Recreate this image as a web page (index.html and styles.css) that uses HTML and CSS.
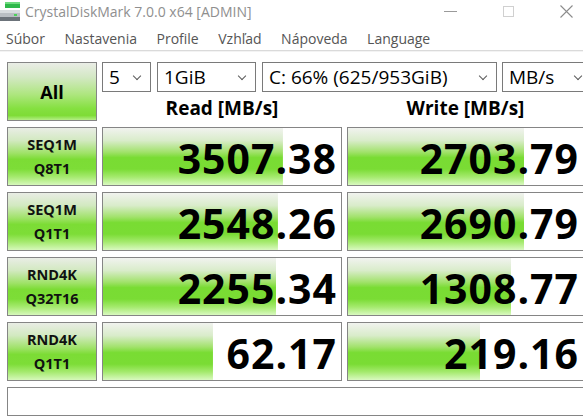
FILE: index.html
```html
<!DOCTYPE html>
<html lang="sk">
<head>
    <meta charset="UTF-8">
    <title>CrystalDiskMark 7.0.0 x64 [ADMIN]</title>
    <link rel="stylesheet" href="styles.css">
</head>
<body>
    <div class="window">
        <div class="titlebar">
            <svg class="app-icon" width="20" height="20" viewBox="0 0 20 20">
                <rect x="5" y="1" width="15" height="6" fill="#2fb84a"/>
                <rect x="5" y="1" width="15" height="2" fill="#6fdc7f"/>
                <rect x="0" y="9" width="20" height="11" fill="#b9bec3"/>
                <rect x="0" y="9" width="20" height="3" fill="#d8dcdf"/>
                <rect x="0" y="16" width="20" height="4" fill="#6c737a"/>
                <rect x="14" y="13" width="3" height="2" fill="#4cd05a"/>
            </svg>
            <span class="title">CrystalDiskMark 7.0.0 x64 [ADMIN]</span>
            <div class="controls">
                <svg class="ctl ctl-min" width="13" height="13" viewBox="0 0 13 13">
                    <line x1="0" y1="6.5" x2="13" y2="6.5" stroke="#9a9a9a" stroke-width="1"/>
                </svg>
                <svg class="ctl ctl-max" width="13" height="13" viewBox="0 0 13 13">
                    <rect x="1.5" y="1.5" width="10" height="10" fill="none" stroke="#d0d0d0" stroke-width="1"/>
                </svg>
                <svg class="ctl ctl-close" width="13" height="13" viewBox="0 0 13 13">
                    <path d="M0.5 0.5 L12.5 12.5 M12.5 0.5 L0.5 12.5" stroke="#8c8c8c" stroke-width="1.1"/>
                </svg>
            </div>
        </div>

        <ul class="menubar">
            <li>Súbor</li>
            <li>Nastavenia</li>
            <li>Profile</li>
            <li>Vzhľad</li>
            <li>Nápoveda</li>
            <li>Language</li>
        </ul>

        <div class="main">
            <button class="all-btn">All</button>

            <div class="top">
                <div class="combos">
                    <div class="combo combo-count"><span>5</span><i class="chevron"></i></div>
                    <div class="combo combo-size"><span>1GiB</span><i class="chevron"></i></div>
                    <div class="combo combo-drive"><span>C: 66% (625/953GiB)</span><i class="chevron"></i></div>
                    <div class="combo combo-unit"><span>MB/s</span><i class="chevron"></i></div>
                </div>
                <div class="heads">
                    <div class="head">Read [MB/s]</div>
                    <div class="head">Write [MB/s]</div>
                </div>
            </div>

            <div class="test-btn">SEQ1M<br>Q8T1</div>
            <div class="result" style="--fill: 75.6%">3507.38</div>
            <div class="result" style="--fill: 74.9%">2703.79</div>

            <div class="test-btn">SEQ1M<br>Q1T1</div>
            <div class="result" style="--fill: 73.5%">2548.26</div>
            <div class="result" style="--fill: 74.9%">2690.79</div>

            <div class="test-btn">RND4K<br>Q32T16</div>
            <div class="result" style="--fill: 72.7%">2255.34</div>
            <div class="result" style="--fill: 69.4%">1308.77</div>

            <div class="test-btn">RND4K<br>Q1T1</div>
            <div class="result" style="--fill: 46.2%">62.17</div>
            <div class="result" style="--fill: 56.2%">219.16</div>

            <div class="comment"></div>
        </div>
    </div>
</body>
</html>
```

FILE: styles.css
```css
body {
    margin: 0;
    background-color: white;
    font-family: "Open Sans", "Noto Sans", sans-serif;
    overflow: hidden;
}
.window {
    width: 583px;
    height: 418px;
    overflow: hidden;
    background-color: white;
}
.titlebar {
    display: flex;
    align-items: center;
    height: 22px;
}
.app-icon {
    margin-right: 5px;
}
.title {
    font-size: 14px;
    color: #8f8f8f;
    white-space: nowrap;
}
.controls {
    display: flex;
    align-items: center;
    margin-left: auto;
    width: 140px;
    height: 22px;
}
.ctl-min {
    margin-left: 1px;
}
.ctl-max {
    margin-left: 45px;
}
.ctl-close {
    margin-left: 45px;
}
.menubar {
    display: flex;
    list-style: none;
    margin: 0;
    padding: 7px 0 0 6px;
    height: 21px;
    border-bottom: 1px solid #dadada;
    box-shadow: 0 1px 0 #f3f3f3;
}
.menubar li {
    font-size: 14px;
    color: #555;
    margin-right: 19.5px;
    line-height: 20px;
}
.main {
    display: grid;
    grid-template-columns: 90px 240px 237px;
    grid-template-rows: 59px 59px 59px 59px 59px 29px;
    column-gap: 5px;
    row-gap: 6px;
    padding: 11px 0 0 7px;
}
.all-btn {
    box-sizing: border-box;
    height: 59px;
    border: 1px solid #858585;
    font-family: inherit;
    font-size: 18px;
    font-weight: bold;
    color: black;
    padding: 0;
    background: linear-gradient(to bottom, #eaede6 0%, #d3e8c4 25%, #aee67f 55%, #85e040 80%, #7edc36 92%, #b4ee86 100%);
}
.top {
    grid-column: 2 / 4;
    display: flex;
    flex-direction: column;
}
.combos {
    display: flex;
    height: 30px;
}
.combo {
    box-sizing: border-box;
    display: flex;
    align-items: center;
    height: 30px;
    border: 1px solid #7a7a7a;
    padding-left: 6px;
    font-size: 19px;
    color: black;
    white-space: nowrap;
    position: relative;
    flex-shrink: 0;
}
.combo-count {
    width: 49px;
    margin-right: 6px;
}
.combo-size {
    width: 99px;
    margin-right: 6px;
}
.combo-drive {
    width: 235px;
    margin-right: 5px;
}
.combo-unit {
    width: 90px;
}
.chevron {
    position: absolute;
    right: 10px;
    top: 10px;
    width: 5px;
    height: 5px;
    border-right: 1px solid #5a5a5a;
    border-bottom: 1px solid #5a5a5a;
    transform: rotate(45deg);
}
.heads {
    display: grid;
    grid-template-columns: 240px 237px;
    column-gap: 5px;
    height: 29px;
}
.head {
    text-align: center;
    font-size: 19px;
    font-weight: bold;
    line-height: 30px;
    padding-top: 1px;
    color: black;
}
.test-btn {
    box-sizing: border-box;
    display: flex;
    align-items: center;
    justify-content: center;
    text-align: center;
    border: 1px solid #858585;
    font-size: 14.5px;
    font-weight: bold;
    line-height: 24px;
    color: #111;
    background: linear-gradient(to bottom, #e9ede5 0%, #d2e9c0 22%, #9fe268 44%, #7cdc35 55%, #7ddd37 72%, #a6ea70 86%, #d6f8bb 100%);
}
.result {
    box-sizing: border-box;
    border: 1px solid #858585;
    display: flex;
    align-items: center;
    justify-content: flex-end;
    padding: 3px 4px 0 0;
    font-size: 41px;
    font-weight: bold;
    letter-spacing: 1px;
    color: black;
    background-color: white;
    background-image: linear-gradient(to bottom, #f1f3ef 0%, #d9ecca 22%, #a2e26c 42%, #79dc33 52%, #7adc34 72%, #a5ea6e 86%, #d9f9c0 100%);
    background-repeat: no-repeat;
    background-size: var(--fill) 100%;
}
.comment {
    grid-column: 1 / 4;
    box-sizing: border-box;
    border: 1px solid #858585;
    background-color: white;
}
```
